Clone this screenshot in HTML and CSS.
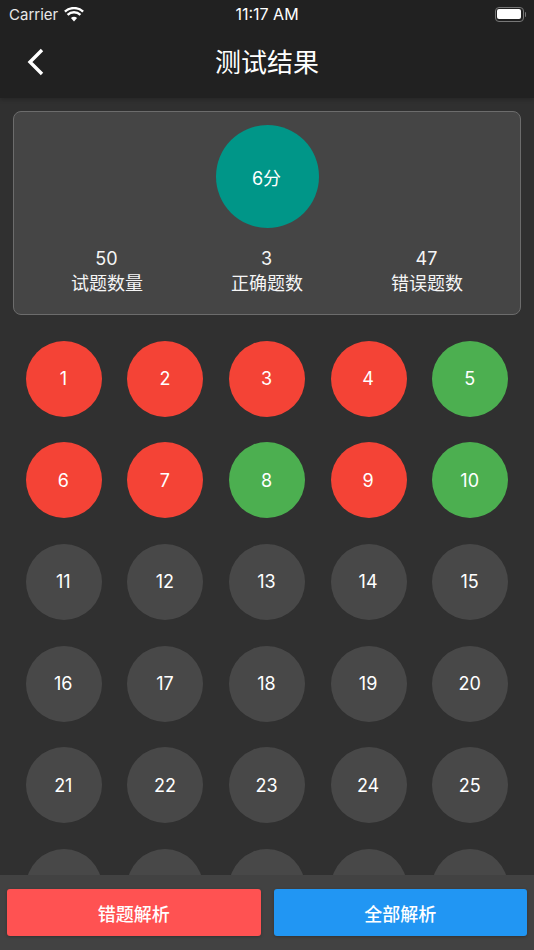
FILE: index.html
```html
<!DOCTYPE html>
<html lang="zh-CN">
<head>
    <meta charset="UTF-8">
    <meta name="viewport" content="width=device-width, initial-scale=1.0">
    <title>测试结果</title>
    <link rel="stylesheet" href="styles.css">
</head>
<body>
    <div class="page">
        <header class="header">
            <div class="status-bar">
                <div class="status-left">
                    <span>Carrier</span>
                    <svg class="wifi" width="20" height="15" viewBox="0 0 20 15">
                        <path d="M10 14.6 L6.9 11.1 A4.6 4.6 0 0 1 13.1 11.1 Z" fill="#fff"/>
                        <path d="M3.6 7.9 A9.2 9.2 0 0 1 16.4 7.9" fill="none" stroke="#fff" stroke-width="2.4"/>
                        <path d="M0.9 4.7 A13.2 13.2 0 0 1 19.1 4.7" fill="none" stroke="#fff" stroke-width="2.4"/>
                    </svg>
                </div>
                <div class="status-time">11:17 AM</div>
                <div class="battery">
                    <div class="battery-body"><div class="battery-fill"></div></div>
                    <div class="battery-cap"></div>
                </div>
            </div>
            <div class="nav-bar">
                <svg class="back" width="20" height="28" viewBox="0 0 20 28">
                    <path d="M16 2 L4 14 L16 26" fill="none" stroke="#fff" stroke-width="3.4"/>
                </svg>
                <h1 class="title">测试结果</h1>
            </div>
        </header>

        <main class="content">
            <section class="summary">
                <div class="score">6分</div>
                <div class="stats">
                    <div class="stat"><span class="stat-num">50</span><span>试题数量</span></div>
                    <div class="stat"><span class="stat-num">3</span><span>正确题数</span></div>
                    <div class="stat"><span class="stat-num">47</span><span>错误题数</span></div>
                </div>
            </section>

            <section class="answers">
                <div class="cell"><div class="ball wrong">1</div></div>
                <div class="cell"><div class="ball wrong">2</div></div>
                <div class="cell"><div class="ball wrong">3</div></div>
                <div class="cell"><div class="ball wrong">4</div></div>
                <div class="cell"><div class="ball right">5</div></div>
                <div class="cell"><div class="ball wrong">6</div></div>
                <div class="cell"><div class="ball wrong">7</div></div>
                <div class="cell"><div class="ball right">8</div></div>
                <div class="cell"><div class="ball wrong">9</div></div>
                <div class="cell"><div class="ball right">10</div></div>
                <div class="cell"><div class="ball">11</div></div>
                <div class="cell"><div class="ball">12</div></div>
                <div class="cell"><div class="ball">13</div></div>
                <div class="cell"><div class="ball">14</div></div>
                <div class="cell"><div class="ball">15</div></div>
                <div class="cell"><div class="ball">16</div></div>
                <div class="cell"><div class="ball">17</div></div>
                <div class="cell"><div class="ball">18</div></div>
                <div class="cell"><div class="ball">19</div></div>
                <div class="cell"><div class="ball">20</div></div>
                <div class="cell"><div class="ball">21</div></div>
                <div class="cell"><div class="ball">22</div></div>
                <div class="cell"><div class="ball">23</div></div>
                <div class="cell"><div class="ball">24</div></div>
                <div class="cell"><div class="ball">25</div></div>
                <!-- last row only peeks out above the footer, numbers are hidden behind it -->
                <div class="cell"><div class="ball"></div></div>
                <div class="cell"><div class="ball"></div></div>
                <div class="cell"><div class="ball"></div></div>
                <div class="cell"><div class="ball"></div></div>
                <div class="cell"><div class="ball"></div></div>
            </section>
        </main>

        <footer class="footer">
            <button class="btn btn-red">错题解析</button>
            <button class="btn btn-blue">全部解析</button>
        </footer>
    </div>
</body>
</html>
```

FILE: styles.css
```css
* {
    box-sizing: border-box;
}

body {
    margin: 0;
    font-family: Inter, "Noto Sans CJK SC", sans-serif;
    background-color: #303030;
    color: #ffffff;
}

.page {
    display: flex;
    flex-direction: column;
    height: 950px;
    overflow: hidden;
}

.header {
    height: 98px;
    flex-shrink: 0;
    background-color: #212121;
    box-shadow: 0 2px 4px rgba(0, 0, 0, 0.2);
    position: relative;
}

.status-bar {
    display: flex;
    justify-content: space-between;
    align-items: center;
    height: 28px;
    padding: 0 9px;
    font-size: 15px;
    position: relative;
}

.status-left {
    display: flex;
    align-items: center;
    gap: 6px;
    color: #e8e8e8;
}

.status-time {
    position: absolute;
    left: 0;
    right: 0;
    text-align: center;
    font-size: 16px;
    font-weight: 400;
}

.battery {
    display: flex;
    align-items: center;
    margin-right: -1px;
}

.battery-body {
    width: 29px;
    height: 15px;
    border: 1.5px solid #777777;
    border-radius: 4px;
    padding: 1.5px;
}

.battery-fill {
    height: 100%;
    background-color: #ffffff;
    border-radius: 2px;
}

.battery-cap {
    width: 1.5px;
    height: 5px;
    margin-left: 1px;
    background-color: #777777;
    border-radius: 0 1px 1px 0;
}

.nav-bar {
    display: flex;
    align-items: center;
    justify-content: center;
    height: 70px;
    padding-bottom: 6px;
    position: relative;
}

.back {
    position: absolute;
    left: 26px;
    top: 20px;
}

.title {
    margin: 0;
    font-size: 26px;
    font-weight: 400;
}

.content {
    flex: 1;
    min-height: 0;
    overflow: hidden;
    padding: 13px 13px 0;
}

.summary {
    height: 204px;
    background-color: #454545;
    border: 1px solid #6c6c6c;
    border-radius: 8px;
    padding-top: 13px;
}

.score {
    width: 103px;
    height: 103px;
    margin: 0 auto;
    border-radius: 50%;
    background-color: #009688;
    display: flex;
    align-items: center;
    justify-content: center;
    padding-right: 1px;
    font-size: 18px;
}

.stats {
    display: grid;
    grid-template-columns: repeat(3, 1fr);
    margin-top: 18px;
    padding: 0 13px;
}

.stat {
    display: flex;
    flex-direction: column;
    align-items: center;
    font-size: 18px;
    line-height: 25px;
    color: #f5f5f5;
}

.stat-num {
    margin-right: 1px;
}

.answers {
    display: grid;
    grid-template-columns: repeat(5, 1fr);
    grid-auto-rows: 101.6px;
    margin-top: 13px;
}

.cell {
    display: flex;
    align-items: center;
    justify-content: center;
}

.ball {
    width: 76px;
    height: 76px;
    border-radius: 50%;
    background-color: #484848;
    display: flex;
    align-items: center;
    justify-content: center;
    padding-right: 1px;
    font-size: 18px;
}

.wrong {
    background-color: #f44336;
}

.right {
    background-color: #4caf50;
}

.footer {
    height: 75px;
    flex-shrink: 0;
    background-color: #424242;
    display: flex;
    gap: 13px;
    padding: 14px 7px;
}

.btn {
    flex: 1;
    border: none;
    border-radius: 3px;
    color: #ffffff;
    font-family: inherit;
    font-size: 18px;
    font-weight: 500;
    box-shadow: 0 1px 3px rgba(0, 0, 0, 0.25);
}

.btn-red {
    background-color: #ff5252;
}

.btn-blue {
    background-color: #2196f3;
}
```
